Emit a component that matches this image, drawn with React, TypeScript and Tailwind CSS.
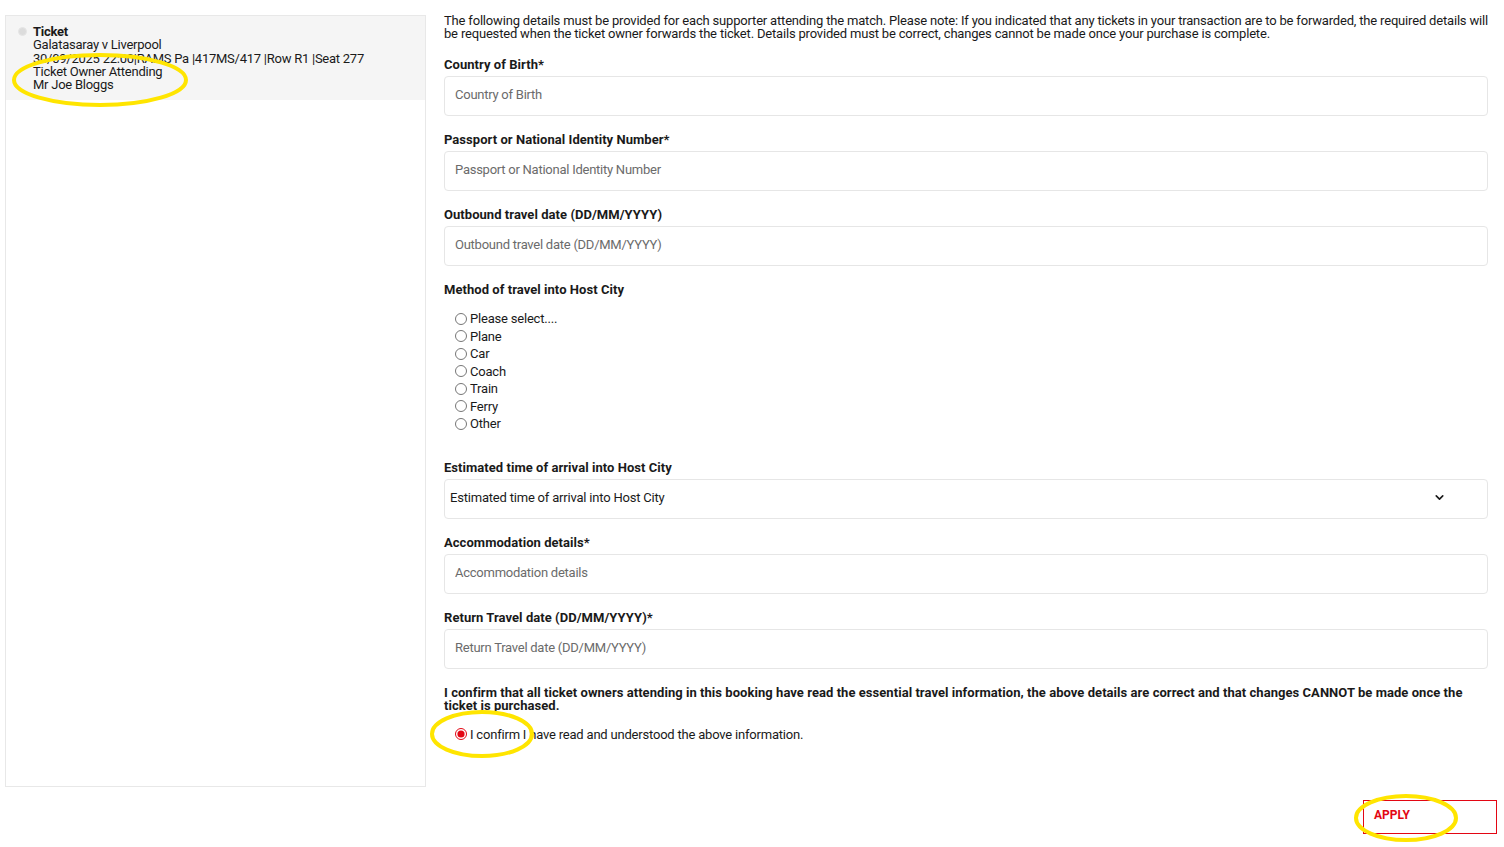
import React from 'react';
import { ChevronDown } from 'lucide-react';

const font = { fontFamily: 'Roboto, "Liberation Sans", sans-serif' };

const travelMethods = ['Please select....', 'Plane', 'Car', 'Coach', 'Train', 'Ferry', 'Other'];

const Label = ({ children }: { children: React.ReactNode }) => (
  <div className="text-[13px] leading-[13px] font-bold tracking-[0.05px] text-[#1a1a1a]">{children}</div>
);

const TextField = ({ label, placeholder }: { label: string; placeholder: string }) => (
  <div className="flex flex-col gap-[5px]">
    <Label>{label}</Label>
    <input
      placeholder={placeholder}
      className="h-[40px] w-full rounded-[4px] border border-[#e6e6e6] bg-white px-[10px] pb-[3px] text-[13px] tracking-[-0.25px] text-[#1a1a1a] outline-none placeholder:text-[#6b6b6b]"
    />
  </div>
);

const Annotations = () => (
  <svg className="pointer-events-none absolute left-0 top-0" width="1504" height="847">
    <g fill="none" stroke="#ffe500" strokeWidth="4">
      <ellipse cx="100" cy="80" rx="86" ry="25" />
      <ellipse cx="482" cy="734" rx="50" ry="22" />
      <ellipse cx="1406" cy="818" rx="50" ry="22" />
    </g>
  </svg>
);

export default function App() {
  return (
    <div className="relative h-[847px] w-[1504px] overflow-hidden bg-white text-[#1a1a1a]" style={font}>
      <div className="flex pl-[5px] pt-[15px]">
        {/* Ticket list */}
        <aside className="h-[772px] w-[421px] shrink-0 border border-[#e8e8e8]">
          <div className="flex gap-[7px] bg-[#f5f5f5] pb-[9px] pl-[12px] pt-[9px]">
            <span className="mt-[2px] h-[9px] w-[9px] shrink-0 rounded-full border border-[#e6e6e6] bg-[#dcdcdc]" />
            <div className="-ml-[1px] text-[13px] leading-[13.25px] tracking-[-0.25px]">
              <div className="font-bold">Ticket</div>
              <div>Galatasaray v Liverpool</div>
              <div>30/09/2025 22:00|RAMS Pa |417MS/417 |Row R1 |Seat 277</div>
              <div>Ticket Owner Attending</div>
              <div>Mr Joe Bloggs</div>
            </div>
          </div>
        </aside>

        {/* Supporter details */}
        <main className="ml-[18px] flex w-[1044px] flex-col">
          <p className="-mt-[1px] w-[1050px] text-[13px] leading-[13px] tracking-[-0.18px]">
            The following details must be provided for each supporter attending the match. Please note: If you indicated that any tickets in your transaction are to be forwarded, the required details will be requested when the ticket owner forwards the ticket. Details provided must be correct, changes cannot be made once your purchase is complete.
          </p>

          <div className="mt-[18px] flex flex-col gap-[17px]">
            <TextField label="Country of Birth*" placeholder="Country of Birth" />
            <TextField label="Passport or National Identity Number*" placeholder="Passport or National Identity Number" />
            <TextField label="Outbound travel date (DD/MM/YYYY)" placeholder="Outbound travel date (DD/MM/YYYY)" />
          </div>

          <div className="mt-[17px]">
            <Label>Method of travel into Host City</Label>
            <div className="mt-[14px] flex flex-col pl-[11px]">
              {travelMethods.map((m) => (
                <label key={m} className="flex h-[17.5px] items-center gap-[3px] text-[13px] tracking-[-0.2px]">
                  <input type="radio" name="travel" className="m-0 h-[12px] w-[12px]" />
                  <span>{m}</span>
                </label>
              ))}
            </div>
          </div>

          <div className="mt-[28px] flex flex-col gap-[5px]">
            <Label>Estimated time of arrival into Host City</Label>
            <div className="flex h-[40px] items-center justify-between rounded-[4px] border border-[#e6e6e6] pb-[2px] pl-[5px] pr-[41px] text-[13px] tracking-[-0.2px]">
              <span>Estimated time of arrival into Host City</span>
              <ChevronDown size={13} strokeWidth={3} />
            </div>
          </div>

          <div className="mt-[17px] flex flex-col gap-[17px]">
            <TextField label="Accommodation details*" placeholder="Accommodation details" />
            <TextField label="Return Travel date (DD/MM/YYYY)*" placeholder="Return Travel date (DD/MM/YYYY)" />
          </div>

          <div className="mt-[17px] w-[1040px] text-[13px] leading-[13px] font-bold tracking-[0.05px]">
            I confirm that all ticket owners attending in this booking have read the essential travel information, the above details are correct and that changes CANNOT be made once the ticket is purchased.
          </div>
          <label className="mt-[13px] flex items-center gap-[3px] pl-[11px] text-[13px] tracking-[-0.2px]">
            <input type="radio" checked readOnly className="m-0 h-[12px] w-[12px] accent-[#e30613]" />
            <span>I confirm I have read and understood the above information.</span>
          </label>
        </main>
      </div>

      <div className="flex justify-end pr-[7px] pt-[13px]">
        <button className="h-[34px] w-[134px] border border-[#e30613] pb-[4px] pl-[10px] text-left text-[12px] font-bold text-[#e30613]">
          APPLY
        </button>
      </div>

      <Annotations />
    </div>
  );
}
